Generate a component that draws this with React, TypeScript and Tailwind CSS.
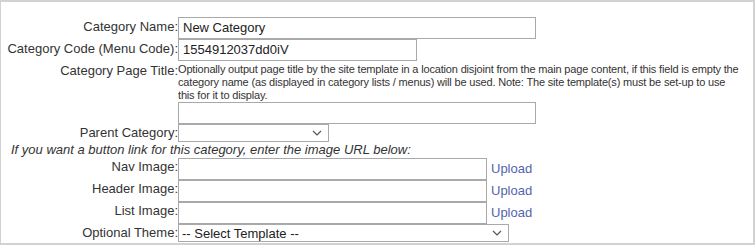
import React from "react";

const font = { fontFamily: '"Liberation Sans", Arial, sans-serif' };

function Chevron() {
  return (
    <svg width="10" height="6" viewBox="0 0 10 6" className="shrink-0">
      <path d="M1 1 L5 5 L9 1" fill="none" stroke="#555" strokeWidth="1.2" />
    </svg>
  );
}

const labelCls = "w-[177px] shrink-0 text-right text-[13px] leading-[15px] text-[#333] whitespace-nowrap";
const inputCls = "h-[22px] border border-[#a9a9a9] bg-white pl-[4px] text-[13px] leading-[20px] text-[#222]";

function UploadRow({ label }: { label: string }) {
  return (
    <div className="flex h-[22px] items-start">
      <div className={labelCls + " pt-[1px]"}>{label}</div>
      <div className={inputCls + " w-[309px]"}></div>
      <div className="pl-[4px] pt-[3px] text-[13px] leading-[15px] text-[#5463ad]">Upload</div>
    </div>
  );
}

export default function App() {
  return (
    <div className="h-[245px] w-[755px] bg-white" style={font}>
      <div className="h-[245px] w-[755px] border-l border-t-2 border-r-2 border-b-2 border-[#d2d2d2] pt-[15px]">
        <div className="flex h-[22px] items-start">
          <div className={labelCls + " pt-[2px]"}>Category Name:</div>
          <div className={inputCls + " w-[358px]"}>New Category</div>
        </div>
        <div className="flex h-[22px] items-start">
          <div className={labelCls + " pt-[2px]"}>Category Code (Menu Code):</div>
          <div className={inputCls + " w-[239px]"}>1554912037dd0iV</div>
        </div>
        <div className="mt-[2px] flex items-start">
          <div className={labelCls + " pt-[0px]"}>Category Page Title:</div>
          <div className="w-[566px]">
            <div className="text-[11px] leading-[13px] tracking-[-0.17px] text-[#333]">
              Optionally output page title by the site template in a location disjoint from the main page content, if this field is empty the category name (as displayed in category lists / menus) will be used. Note: The site template(s) must be set-up to use this for it to display.
            </div>
            <div className={inputCls + " w-[358px]"}></div>
          </div>
        </div>
        <div className="flex h-[18px] items-start">
          <div className={labelCls + " pt-[1px]"}>Parent Category:</div>
          <div className="flex h-[18px] w-[151px] items-center justify-end border border-[#a9a9a9] bg-white pr-[6px]">
            <Chevron />
          </div>
        </div>
        <div className="pl-[10px] pt-[0px] text-[13px] italic leading-[15px] text-[#333]">
          If you want a button link for this category, enter the image URL below:
        </div>
        <div className="mt-[1px]">
          <UploadRow label="Nav Image:" />
          <UploadRow label="Header Image:" />
          <UploadRow label="List Image:" />
        </div>
        <div className="flex h-[18px] items-start">
          <div className={labelCls + " pt-[1px]"}>Optional Theme:</div>
          <div className="flex h-[18px] w-[331px] items-center justify-between border border-[#a9a9a9] bg-white pl-[3px] pr-[6px]">
            <span className="text-[13px] leading-[15px] text-[#222]">-- Select Template --</span>
            <Chevron />
          </div>
        </div>
      </div>
    </div>
  );
}
